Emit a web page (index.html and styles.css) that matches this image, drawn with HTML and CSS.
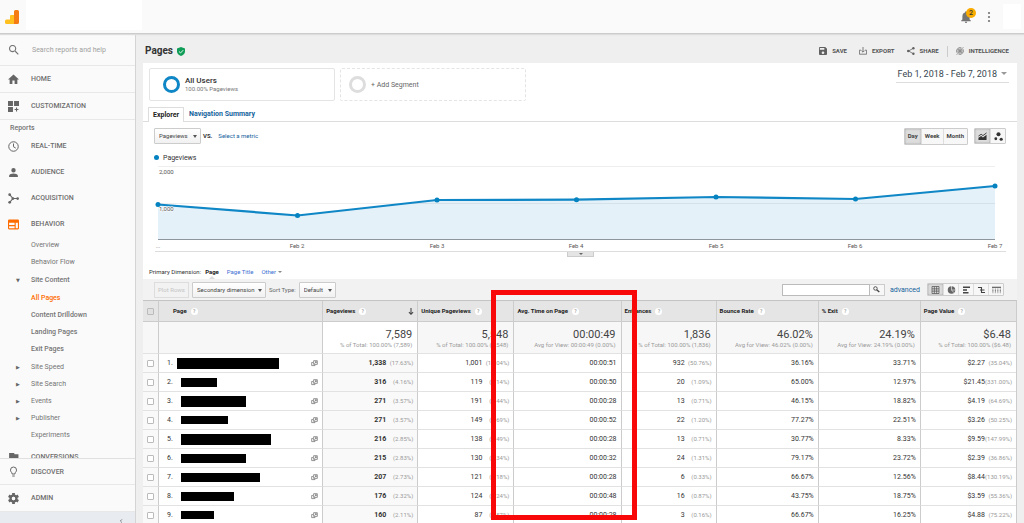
FILE: index.html
```html
<!DOCTYPE html>
<html lang="en">
<head>
<meta charset="utf-8">
<title>Pages - Analytics</title>
<link rel="stylesheet" href="styles.css">
</head>
<body>
<svg class="defs" aria-hidden="true">
  <symbol id="open" viewBox="0 0 8 8"><g fill="none" stroke="currentColor" stroke-width="0.9"><path d="M3 .8h4.2v4.2H3z"/><path d="M2.2 2.8H.8v3.6h3.8V5.6"/><path d="M4 4.2 6 2M4.6 2H6v1.4"/></g></symbol>
</svg>
<header class="topbar">
  <svg class="logo" viewBox="0 0 14 14"><path d="M9 1.500A1.500 1.500 0 0 1 10.500 0h2A1.500 1.500 0 0 1 14 1.500v11a1.500 1.500 0 0 1-1.500 1.500H9z" fill="#f57c14"/><path d="M9 5H6a1 1 0 0 0-1 1v3.500H1.500A1.500 1.500 0 0 0 0 11v1.500A1.500 1.500 0 0 0 1.500 14H9z" fill="#ffc020"/></svg>
  <div class="account"></div>
  <button class="bell" aria-label="Notifications"><svg viewBox="4 2 16 20"><path fill="#757575" d="M12 22a2 2 0 0 0 2-2h-4a2 2 0 0 0 2 2zm6-6v-5c0-3-1.600-5.600-4.500-6.300V4a1.500 1.500 0 0 0-3 0v.7C7.600 5.400 6 7.900 6 11v5l-2 2v1h16v-1z"/></svg><span class="badge">2</span></button>
  <button class="more" aria-label="More"><svg viewBox="0 0 4 12"><g fill="#757575"><circle cx="2" cy="2" r="1.100"/><circle cx="2" cy="6" r="1.100"/><circle cx="2" cy="10" r="1.100"/></g></svg></button>
  <div class="avatar"></div>
</header>
<div class="app">
  <aside class="sidebar">
    <label class="search"><svg viewBox="3 3 18 18"><path fill="#757575" d="M15.500 14h-.8l-.3-.3A6.500 6.500 0 1 0 13.700 14.400l.3.3v.8l5 5 1.500-1.500zm-6 0a4.500 4.500 0 1 1 0-9 4.500 4.500 0 0 1 0 9z"/></svg><input type="text" placeholder="Search reports and help" aria-label="Search reports and help"></label>
    <a class="nav boxed" href="#"><svg viewBox="2 2 20 20"><path fill="#666" d="M10 20v-6h4v6h5v-8h3L12 3 2 12h3v8z"/></svg>HOME</a>
    <a class="nav boxed" href="#"><svg viewBox="2 2 20 20"><path fill="#666" d="M2 2h9v9H2zM13 2h9v9h-9zM2 13h9v9H2zM16.500 14h2v2.500H21v2h-2.500V21h-2v-2.500H14v-2h2.500z"/></svg>CUSTOMIZATION</a>
    <nav class="reports">
      <h2>Reports</h2>
      <a class="nav" href="#"><svg viewBox="1 1 22 22"><g fill="none" stroke="#666" stroke-width="2"><circle cx="12" cy="12" r="9.500"/><path d="M12 6v6.500l4.500 2.700"/></g></svg>REAL-TIME</a>
      <a class="nav" href="#"><svg viewBox="2 2 20 20"><path fill="#666" d="M12 12a4 4 0 1 0 0-8 4 4 0 0 0 0 8zm0 2c-3 0-8 1.300-8 4v2h16v-2c0-2.700-5-4-8-4z"/></svg>AUDIENCE</a>
      <a class="nav" href="#"><svg viewBox="0 0 20 20"><path fill="none" stroke="#666" stroke-width="2" d="M3 3l6 7-6 7M9 10h9"/><g fill="#666"><circle cx="3" cy="3" r="2.500"/><circle cx="3" cy="17" r="2.500"/><circle cx="9" cy="10" r="2.500"/><circle cx="17.500" cy="10" r="2.500"/></g></svg>ACQUISITION</a>
      <a class="nav" href="#"><svg viewBox="0 0 20 20"><path fill="#ff6d00" fill-rule="evenodd" d="M2 1h16a2 2 0 0 1 2 2v14a2 2 0 0 1-2 2H2a2 2 0 0 1-2-2V3a2 2 0 0 1 2-2zm0 6v4h10V7zm0 6v4h10v-4zm12-6v10h4V7z"/></svg>BEHAVIOR</a>
      <ul class="sub">
        <li><a href="#">Overview</a></li>
        <li><a href="#">Behavior Flow</a></li>
        <li class="open"><a href="#">Site Content</a>
          <ul>
            <li><a class="current" href="#">All Pages</a></li>
            <li><a href="#">Content Drilldown</a></li>
            <li><a href="#">Landing Pages</a></li>
            <li><a href="#">Exit Pages</a></li>
          </ul>
        </li>
        <li class="closed"><a href="#">Site Speed</a></li>
        <li class="closed"><a href="#">Site Search</a></li>
        <li class="closed"><a href="#">Events</a></li>
        <li class="closed"><a href="#">Publisher</a></li>
        <li><a href="#">Experiments</a></li>
      </ul>
      <a class="nav" href="#"><svg viewBox="2 2 20 20"><path fill="#666" d="M14 6l-1-2H4v17h2v-6h6l1 2h8V6z"/></svg>CONVERSIONS</a>
    </nav>
    <a class="nav boxed top" href="#"><svg viewBox="2 1 20 22"><path fill="none" stroke="#666" stroke-width="2" d="M9 17v-2.500C7 13.200 6 11.500 6 9a6 6 0 0 1 12 0c0 2.500-1 4.200-3 5.500V17zM9.500 21h5"/></svg>DISCOVER</a>
    <a class="nav boxed" href="#"><svg viewBox="0 0 20 20"><circle cx="10" cy="10" r="5.200" fill="none" stroke="#666" stroke-width="4.400"/><g stroke="#666" stroke-width="5"><path d="M10 0v4M10 16v4M1.300 5l3.500 2M15.200 13l3.500 2M1.300 15l3.500-2M15.200 7l3.500-2"/></g><circle cx="10" cy="10" r="3" fill="#fafafa"/></svg>ADMIN</a>
    <button class="collapse" aria-label="Collapse menu"><svg viewBox="0 0 4 6"><path d="M3.500.5 1 3l2.500 2.500" fill="none" stroke="#555"/></svg></button>
  </aside>
  <main>
    <div class="titlebar">
      <h1>Pages</h1>
      <svg class="shield" viewBox="0 0 18 20"><path d="M9 0 0 3.500V10c0 5 4 8.800 9 10 5-1.200 9-5 9-10V3.500z" fill="#0f9d58"/><path d="M4.500 10 8 13.300l6-6.300" fill="none" stroke="#fff" stroke-width="2"/></svg>
      <div class="actions">
        <button><svg viewBox="3 3 18 18"><path fill="#616161" fill-rule="evenodd" d="M17 3H5a2 2 0 0 0-2 2v14a2 2 0 0 0 2 2h14a2 2 0 0 0 2-2V7zm-5 16a3 3 0 1 1 0-6 3 3 0 0 1 0 6zm3-10H5V5h10z"/></svg>SAVE</button>
        <button><svg viewBox="2 2 20 20"><path fill="none" stroke="#616161" stroke-width="2" d="M7 10H3v10h18V10h-4M12 2v12M8 11l4 4 4-4"/></svg>EXPORT</button>
        <button><svg viewBox="2 2 20 20"><path fill="none" stroke="#616161" stroke-width="2" d="M18 5 6 12l12 7"/><g fill="#616161"><circle cx="18" cy="5" r="3"/><circle cx="5" cy="12" r="3"/><circle cx="18" cy="19" r="3"/></g></svg>SHARE</button>
        <span class="rule"></span>
        <button><svg viewBox="1 1 22 22"><g fill="none" stroke="#616161" stroke-width="2"><path d="M4 17a9.500 9.500 0 0 1 12-13.500M20 7A9.500 9.500 0 0 1 8 20.500M21 2l-4 4M3 22l4-4"/><circle cx="12" cy="12" r="5.500"/></g><circle cx="12" cy="12" r="2.500" fill="#616161"/></svg>INTELLIGENCE</button>
      </div>
    </div>
    <div class="panel">
      <section class="segments">
        <button class="segment"><span class="ring"></span><span><b>All Users</b><small>100.00% Pageviews</small></span></button>
        <button class="segment add"><span class="ring"></span><span>+ Add Segment</span></button>
        <button class="dates">Feb 1, 2018 - Feb 7, 2018<i class="caret"></i></button>
      </section>
      <div class="tabs"><a class="active" href="#">Explorer</a><a href="#">Navigation Summary</a></div>
      <div class="controls">
        <span class="pick metric"><select aria-label="Metric"><option>Pageviews</option></select></span>
        <b>VS.</b>
        <a href="#">Select a metric</a>
        <div class="group range"><button class="on">Day</button><button>Week</button><button>Month</button></div>
        <div class="group views">
          <button class="on" aria-label="Line chart"><svg viewBox="0 0 20 18"><path fill="none" stroke="#333" stroke-width="2" d="M1 8l6-4 4 3 8-6"/><path fill="#333" d="M1 12l6-4 4 3 8-6v12H1z"/></svg></button>
          <button aria-label="Motion chart"><svg viewBox="0 0 20 20"><g fill="#333"><circle cx="10" cy="5" r="4.500"/><circle cx="4" cy="15" r="3.200"/><circle cx="16" cy="16" r="3.500"/></g></svg></button>
        </div>
      </div>
      <div class="legend"><i></i>Pageviews</div>
      <div class="chart">
        <svg viewBox="0 0 874 90" role="img" aria-label="Pageviews by day">
          <path d="M15 3.500H852M15 40.500H852" stroke="#eee"/>
          <path d="M15 41.500 154.500 52.500 294 37 433.500 36.700 573 34 712.500 36 852 23V76H15z" fill="#0582c6" fill-opacity=".11"/>
          <path d="M15 76.500H852" stroke="#8c969c"/>
          <path d="M12 88.500H863" stroke="#ddd"/>
          <path d="M15 41.500 154.500 52.500 294 37 433.500 36.700 573 34 712.500 36 852 23" fill="none" stroke="#0f86c5" stroke-width="2.200"/>
          <g fill="#0582c0"><circle cx="15" cy="41.500" r="2.500"/><circle cx="154.500" cy="52.500" r="2.500"/><circle cx="294" cy="37" r="2.500"/><circle cx="433.500" cy="36.700" r="2.500"/><circle cx="573" cy="34" r="2.500"/><circle cx="712.500" cy="36" r="2.500"/><circle cx="852" cy="23" r="2.500"/></g>
          <g class="ticks"><text x="16" y="11">2,000</text><text class="halo" x="16" y="48">1,000</text></g>
          <g class="ticks mid"><text x="15" y="85">...</text><text x="154" y="85">Feb 2</text><text x="294" y="85">Feb 3</text><text x="433" y="85">Feb 4</text><text x="573" y="85">Feb 5</text><text x="712" y="85">Feb 6</text><text x="852" y="85">Feb 7</text></g>
        </svg>
        <button class="handle" aria-label="Expand chart"><i class="caret"></i></button>
      </div>
      <div class="dimension"><span>Primary Dimension:</span><b>Page</b><a href="#">Page Title</a><a href="#">Other <i class="caret"></i></a></div>
      <div class="toolbar">
        <button class="plot" disabled>Plot Rows</button>
        <span class="pick second"><select aria-label="Secondary dimension"><option>Secondary dimension</option></select></span>
        <label for="sort">Sort Type:</label>
        <span class="pick sort"><select id="sort"><option>Default</option></select></span>
        <form class="find"><input type="text" aria-label="Search table"><button type="button" aria-label="Search"><svg viewBox="0 0 20 20"><circle cx="7" cy="7" r="5" fill="none" stroke="#444" stroke-width="2.500"/><path d="M10.500 10.500 18 17" stroke="#444" stroke-width="4"/></svg></button></form>
        <a href="#">advanced</a>
        <div class="group kinds">
          <button class="on" aria-label="Table"><svg viewBox="0 0 16 16"><path fill="none" stroke="#555" stroke-width="1.500" d="M1 1h14v14H1zM1 5.700h14M1 10.300h14M5.700 1v14M10.300 1v14"/></svg></button>
          <button aria-label="Pie"><svg viewBox="0 0 16 16"><circle cx="8" cy="8" r="7.500" fill="#666"/><path d="M8 0v8h8M8 8l5 5.500" fill="none" stroke="#eee" stroke-width="1.300"/></svg></button>
          <button aria-label="Bars"><svg viewBox="0 0 16 16"><path stroke="#444" stroke-width="3" d="M1 2.500h14M1 8h8M1 13.500h11"/></svg></button>
          <button aria-label="Comparison"><svg viewBox="0 0 16 16"><path fill="none" stroke="#444" stroke-width="2.200" d="M1 3h7v5M5 8h9M8 8v5h7"/></svg></button>
          <button aria-label="Pivot"><svg viewBox="0 0 20 16"><path fill="none" stroke="#555" stroke-width="2.500" d="M0 2h20"/><path fill="none" stroke="#555" stroke-width="2" stroke-dasharray="2 1" d="M2 5v10M7.500 5v10M13 5v10M18.500 5v10"/></svg></button>
        </div>
      </div>
      <div class="tablewrap">
        <table>
          <colgroup><col class="c-check"><col class="c-page"><col class="c-mid"><col class="c-wide"><col class="c-time"><col class="c-mid"><col class="c-rate"><col class="c-rate"><col class="c-wide"></colgroup>
          <thead>
            <tr><th class="check"><input type="checkbox" aria-label="Select all" disabled></th><th class="name">Page<i class="help">?</i></th><th><span class="sorted">Pageviews<i class="help">?</i><svg viewBox="0 0 8 10"><path d="M4 0v9M1 6l3 3 3-3" fill="none" stroke="#444" stroke-width="1.500"/></svg></span></th><th>Unique Pageviews<i class="help">?</i></th><th>Avg. Time on Page<i class="help">?</i></th><th>Entrances<i class="help">?</i></th><th>Bounce Rate<i class="help">?</i></th><th>% Exit<i class="help">?</i></th><th>Page Value<i class="help">?</i></th></tr>
          </thead>
          <tbody>
            <tr class="total"><td class="check"></td><td></td><td class="key"><b>7,589</b><small>% of Total: 100.00% (7,589)</small></td><td><b>5,548</b><small>% of Total: 100.00% (5,548)</small></td><td><b>00:00:49</b><small>Avg for View: 00:00:49 (0.00%)</small></td><td><b>1,836</b><small>% of Total: 100.00% (1,836)</small></td><td><b>46.02%</b><small>Avg for View: 46.02% (0.00%)</small></td><td><b>24.19%</b><small>Avg for View: 24.19% (0.00%)</small></td><td><b>$6.48</b><small>% of Total: 100.00% ($6.48)</small></td></tr>
            <tr><td class="check"><input type="checkbox" aria-label="Row 1"></td><td><div class="page"><span>1.</span><i class="mask wide" style="width:102px"></i><svg><use href="#open"/></svg></div></td><td class="key">1,338<small>(17.63%)</small></td><td>1,001<small>(18.04%)</small></td><td>00:00:51</td><td>932<small>(50.76%)</small></td><td>36.16%</td><td>33.71%</td><td>$2.27<small>(35.04%)</small></td></tr>
            <tr><td class="check"><input type="checkbox" aria-label="Row 2"></td><td><div class="page"><span>2.</span><i class="mask" style="width:36px"></i><svg><use href="#open"/></svg></div></td><td class="key">316<small>(4.16%)</small></td><td>119<small>(2.14%)</small></td><td>00:00:50</td><td>20<small>(1.09%)</small></td><td>65.00%</td><td>12.97%</td><td>$21.45<small>(331.00%)</small></td></tr>
            <tr><td class="check"><input type="checkbox" aria-label="Row 3"></td><td><div class="page"><span>3.</span><i class="mask tall" style="width:65px"></i><svg><use href="#open"/></svg></div></td><td class="key">271<small>(3.57%)</small></td><td>191<small>(3.44%)</small></td><td>00:00:28</td><td>13<small>(0.71%)</small></td><td>46.15%</td><td>18.82%</td><td>$4.19<small>(64.69%)</small></td></tr>
            <tr><td class="check"><input type="checkbox" aria-label="Row 4"></td><td><div class="page"><span>4.</span><i class="mask short" style="width:47px"></i><svg><use href="#open"/></svg></div></td><td class="key">271<small>(3.57%)</small></td><td>149<small>(2.69%)</small></td><td>00:00:52</td><td>22<small>(1.20%)</small></td><td>77.27%</td><td>22.51%</td><td>$3.26<small>(50.25%)</small></td></tr>
            <tr><td class="check"><input type="checkbox" aria-label="Row 5"></td><td><div class="page"><span>5.</span><i class="mask tall" style="width:90px"></i><svg><use href="#open"/></svg></div></td><td class="key">216<small>(2.85%)</small></td><td>138<small>(2.49%)</small></td><td>00:00:28</td><td>13<small>(0.71%)</small></td><td>30.77%</td><td>8.33%</td><td>$9.59<small>(147.99%)</small></td></tr>
            <tr><td class="check"><input type="checkbox" aria-label="Row 6"></td><td><div class="page"><span>6.</span><i class="mask" style="width:65px"></i><svg><use href="#open"/></svg></div></td><td class="key">215<small>(2.83%)</small></td><td>130<small>(2.34%)</small></td><td>00:00:32</td><td>24<small>(1.31%)</small></td><td>79.17%</td><td>23.72%</td><td>$2.39<small>(36.86%)</small></td></tr>
            <tr><td class="check"><input type="checkbox" aria-label="Row 7"></td><td><div class="page"><span>7.</span><i class="mask" style="width:79px"></i><svg><use href="#open"/></svg></div></td><td class="key">207<small>(2.73%)</small></td><td>121<small>(2.18%)</small></td><td>00:00:28</td><td>6<small>(0.33%)</small></td><td>66.67%</td><td>12.56%</td><td>$8.44<small>(130.19%)</small></td></tr>
            <tr><td class="check"><input type="checkbox" aria-label="Row 8"></td><td><div class="page"><span>8.</span><i class="mask" style="width:53px"></i><svg><use href="#open"/></svg></div></td><td class="key">176<small>(2.32%)</small></td><td>124<small>(2.24%)</small></td><td>00:00:48</td><td>16<small>(0.87%)</small></td><td>43.75%</td><td>18.75%</td><td>$3.59<small>(55.36%)</small></td></tr>
            <tr><td class="check"><input type="checkbox" aria-label="Row 9"></td><td><div class="page"><span>9.</span><i class="mask short" style="width:33px"></i><svg><use href="#open"/></svg></div></td><td class="key">160<small>(2.11%)</small></td><td>87<small>(1.57%)</small></td><td>00:00:28</td><td>3<small>(0.16%)</small></td><td>66.67%</td><td>16.25%</td><td>$4.88<small>(75.22%)</small></td></tr>
          </tbody>
        </table>
        <div class="highlight"></div>
      </div>
    </div>
  </main>
</div>
</body>
</html>
```
FILE: styles.css
```css
* { box-sizing: border-box; }
body { margin: 0; height: 100vh; overflow: hidden; display: flex; flex-direction: column; background: #efefef; color: #333; font: 7px/10px Roboto, "Liberation Sans", sans-serif; }
svg { display: block; flex: none; }
.defs { position: absolute; width: 0; height: 0; }
a { color: inherit; text-decoration: none; }
button, input, select { font: inherit; color: inherit; margin: 0; padding: 0; border: 0; background: none; outline: 0; }
ul { list-style: none; margin: 0; padding: 0; }
i { font-style: normal; }
.caret { display: inline-block; border: 3px solid transparent; border-top-color: currentColor; border-bottom: 0; }

.topbar { flex: none; height: 34px; display: flex; align-items: center; background: #fafafa; border-bottom: 1px solid #ccc; box-shadow: 0 1px 1px #ddd; padding: 0 3px 0 5px; z-index: 1; }
.logo { width: 14px; height: 14px; }
.account { width: 116px; height: 30px; margin: 0 auto 4px 7px; background: #fff; }
.bell { position: relative; width: 10px; margin-right: 16px; }
.bell svg { width: 10px; height: 12px; }
.badge { position: absolute; left: 5px; top: -3px; width: 10px; height: 10px; border-radius: 50%; background: #f9ab00; color: #333; font-weight: 500; text-align: center; }
.more { margin-right: 12px; }
.more svg { width: 4px; height: 12px; }
.avatar { width: 18px; height: 25px; background: #fff; }

.app { flex: 1; min-height: 0; display: flex; }
.sidebar { flex: none; width: 136px; display: flex; flex-direction: column; background: #fafafa; border-right: 1px solid #d4d4d4; color: #757575; }
.search { flex: none; height: 32px; display: flex; align-items: center; gap: 13px; padding: 0 9px; border-bottom: 1px solid #e8e8e8; }
.search svg { width: 10px; height: 10px; }
.search input { flex: 1; min-width: 0; }
.search input::placeholder { color: #a0a0a0; opacity: 1; }
.nav { flex: none; height: 26px; display: flex; align-items: center; gap: 12px; padding-left: 8px; font-weight: 500; color: #6e6e6e; }
.nav svg { width: 11px; height: 11px; }
.boxed { height: 27px; border-bottom: 1px solid #e8e8e8; }
.boxed.top { border-top: 1px solid #e0e0e0; }
.reports { flex: 1; min-height: 0; overflow: hidden; }
.reports h2 { margin: 3px 0 0 10px; font-size: 7px; font-weight: 500; line-height: 10px; }
.sub { font-size: 7px; line-height: 17px; }
.sub > li { position: relative; padding-left: 31px; }
.sub ul { padding: 1px 0; font-weight: 500; }
.sub .open > a { font-weight: 500; }
.sub .open { padding-top: 1px; }
.sub .current { color: #ff6d00; }
.open::before, .closed::before { content: "▼"; position: absolute; left: 16px; font: 5px/17px "DejaVu Sans", sans-serif; color: #666; }
.closed::before { content: "▶"; }
.collapse { flex: none; height: 11px; background: #e8ecf0; display: flex; justify-content: flex-end; align-items: flex-end; padding-right: 12px; }
.collapse svg { width: 4px; height: 4px; }

main { flex: 1; min-width: 0; padding: 0 7px; overflow: hidden; }
.titlebar { height: 29px; padding: 5px 8px 0 2px; display: flex; align-items: center; gap: 4px; }
h1 { margin: 0; font-size: 10px; line-height: 12px; font-weight: 700; }
.shield { width: 8px; height: 9px; }
.actions { margin-left: auto; display: flex; align-items: center; gap: 12px; }
.actions button { display: flex; align-items: center; gap: 5px; font-size: 6px; font-weight: 700; color: #555; }
.actions svg { width: 8px; height: 8px; }
.rule { width: 1px; height: 11px; margin: 0 -4px; background: #ccc; }

.panel { background: #fff; }
.segments { display: flex; gap: 5px; padding: 5px 8px 6px 6px; }
.segment { width: 186px; height: 33px; display: flex; align-items: center; gap: 5px; padding: 0 13px; border: 1px solid #e4e4e4; border-radius: 2px; text-align: left; font-size: 7px; }
.segment b, .segment small { display: block; }
.segment b { font-weight: 500; font-size: 8px; line-height: 9px; }
.segment small { font-size: 6px; line-height: 8px; color: #777; }
.ring { width: 17px; height: 17px; border: 3px solid #0f86c5; border-radius: 50%; }
.add { border-style: dashed; padding: 0 8px; color: #666; }
.add .ring { border-color: #ddd; }
.dates { align-self: flex-start; margin-left: auto; padding: 0 2px 2px; border-bottom: 1px solid #ddd; font-size: 9px; line-height: 12px; color: #37474f; }
.dates .caret { margin-left: 4px; vertical-align: 2px; color: #999; }
.tabs { display: flex; padding: 0 5px; height: 15px; border-bottom: 1px solid #ddd; font-weight: 700; line-height: 15px; }
.tabs a { padding: 0 5px; color: #15639c; }
.tabs .active { color: #222; background: #fff; border: 1px solid #ddd; border-bottom: 0; height: 15px; padding: 0 4px; line-height: 14px; }
.controls { height: 27px; padding: 1px 11px 0; display: flex; align-items: center; font-size: 6px; }
.controls > b { margin: 0 6px 0 2px; }
.controls a, .toolbar a { color: #15639c; }
.pick { position: relative; display: flex; height: 16px; }
.pick select { appearance: none; width: 100%; padding: 0 4px; border: 1px solid #ccc; border-radius: 1px; background: linear-gradient(#fff, #f1f1f1); font-size: 6px; color: #444; }
.pick::after { content: ""; position: absolute; right: 4px; top: 7px; border: 2px solid transparent; border-top: 3px solid #555; border-bottom: 0; pointer-events: none; }
.metric { width: 47px; }
.group { display: flex; border: 1px solid #ccc; border-radius: 1px; background: #f7f7f7; }
.group button { display: flex; align-items: center; justify-content: center; border-left: 1px solid #ddd; font-weight: 700; color: #444; }
.group button:first-child { border-left: 0; }
.group .on { background: #ddd; box-shadow: inset 0 0 2px #999; }
.range { margin-left: auto; height: 17px; }
.range button { padding: 0 3px; }
.views { margin-left: 6px; height: 16px; }
.views button { width: 15px; }
.views svg { width: 9px; height: 9px; }
.legend { display: flex; align-items: center; gap: 4px; height: 14px; padding: 3px 11px 0; }
.legend i { width: 5px; height: 5px; border-radius: 50%; background: #0582c0; }
.chart { position: relative; }
.chart svg { width: 100%; height: auto; }
.ticks { font-size: 6px; fill: #555; }
.mid { text-anchor: middle; }
.halo { paint-order: stroke; stroke: #fff; stroke-width: 1px; }
.handle { position: absolute; left: 50%; bottom: -4px; width: 27px; height: 5px; margin-left: -13px; border: 1px solid #ccc; border-top: 0; background: #e4e4e4; color: #666; line-height: 0; }
.handle .caret { border-width: 2px 2px 0; vertical-align: top; }
.dimension { height: 26px; padding: 14px 5px 0 6px; display: flex; gap: 8px; font-size: 6px; line-height: 10px; }
.dimension span { margin-right: -4px; }
.dimension b { position: relative; color: #222; }
.dimension b::after { content: ""; position: absolute; left: 4px; top: 9px; border: 3px solid transparent; border-top: 0; border-bottom-color: #ddd; }
.dimension a { color: #3c6fd1; }
.dimension .caret { border-width: 2px 2px 0; vertical-align: 1px; color: #888; }
.toolbar { height: 21px; padding: 0 13px 0 11px; display: flex; align-items: center; gap: 3px; background: #f2f2f2; font-size: 6px; color: #666; }
.plot { width: 35px; height: 16px; border: 1px solid #ddd; color: #c4c4c4; }
.second { width: 74px; }
.sort { width: 37px; }
.toolbar a { margin: 0 4px 0 2px; font-size: 7px; }
.find { display: flex; height: 12px; margin-left: auto; }
.find input { width: 88px; border: 1px solid #bbb; background: #fff; }
.find button { width: 15px; border: 1px solid #ccc; border-left: 0; background: #f7f7f7; display: flex; align-items: center; justify-content: center; }
.find svg { width: 7px; height: 7px; }
.kinds { height: 13px; }
.kinds button { width: 15px; }
.kinds svg { width: 9px; height: 8px; }

.tablewrap { position: relative; }
table { width: 100%; table-layout: fixed; border-collapse: separate; border-spacing: 0; border-top: 1px solid #c4c4c4; border-right: 1px solid #ccc; }
.c-check { width: 15px; }
.c-page { width: 164px; }
.c-mid { width: 95px; }
.c-wide { width: 96px; }
.c-time { width: 107px; }
.c-rate { width: 102px; }
th, td { padding: 0 4px; border-left: 1px solid #ccc; border-bottom: 1px solid #e2e2e2; white-space: nowrap; }
th { height: 21px; background: #e5e5e5; border-bottom-color: #ccc; text-align: left; font-size: 6px; font-weight: 700; color: #222; padding: 0 3px; }
th.name { padding-left: 14px; }
.help { display: inline-block; width: 7px; height: 7px; margin-left: 4px; border-radius: 50%; background: #fff; color: #aaa; font-size: 5px; line-height: 7px; text-align: center; vertical-align: middle; }
.sorted { display: flex; align-items: center; }
.sorted svg { width: 6px; height: 7px; margin-left: auto; }
td { height: 19px; text-align: right; background: #fff; }
td small { display: inline-block; width: 27px; font-size: 6px; font-weight: 400; color: #999; }
.key { background: #f9f9f9; font-weight: 700; }
.check { padding: 0; text-align: center; border-left: 0; }
td.check { background: #f9f9f9; }
.check input { appearance: none; display: block; width: 7px; height: 7px; margin: 0 auto; border: 1px solid #bbb; border-radius: 1px; background: #fff; }
.check input:disabled { background: #e0e0e0; }
.total td { height: 32px; background: #f7f7f7; padding: 2px 5px 0; }
.total .key { background: #fff; }
.total b { display: block; font-size: 11px; line-height: 12px; font-weight: 400; color: #444; }
.total small { display: block; width: auto; line-height: 8px; }
.page { display: flex; align-items: center; padding-left: 4px; }
.page span { width: 14px; text-align: left; }
.page svg { width: 7px; height: 7px; margin-left: auto; color: #777; }
.mask { height: 9px; background: #000; }
.wide { height: 11px; margin-left: -4px; }
.tall { height: 11px; }
.short { height: 8px; }
.highlight { position: absolute; left: 40%; top: -10px; width: 146px; height: 230px; margin-left: -2px; border: 5px solid #f80808; pointer-events: none; }
```
